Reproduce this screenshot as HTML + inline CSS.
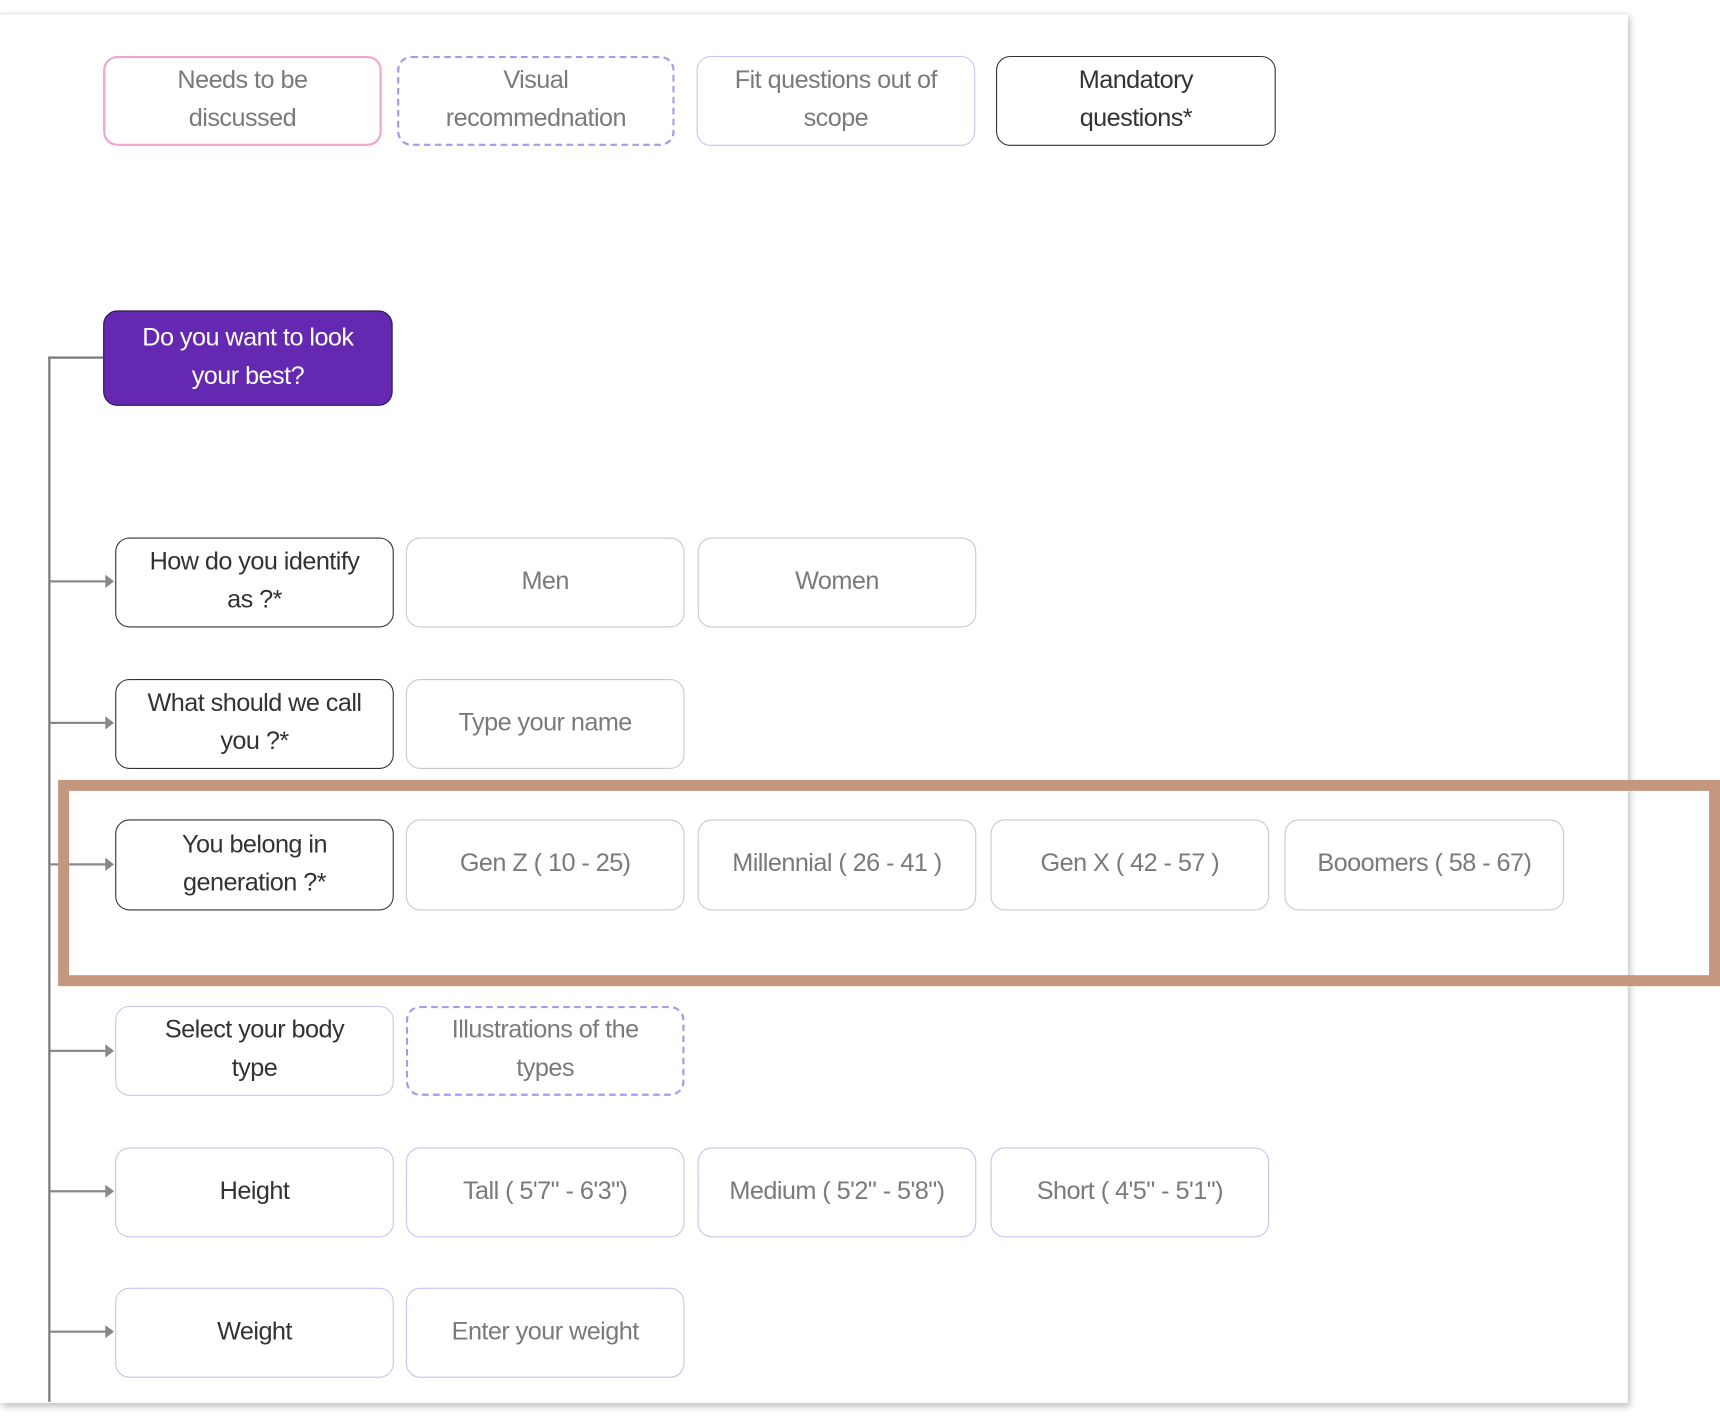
<!DOCTYPE html>
<html><head><meta charset="utf-8"><style>
html,body{margin:0;padding:0;background:#fff;width:1720px;height:1426px;overflow:hidden}
#s{position:absolute;left:0;top:0;width:1568px;height:1300px;transform:scale(1.09694);transform-origin:0 0;font-family:"Liberation Sans",sans-serif}
.page{position:absolute;left:0;top:12px;width:1484px;height:1266px;background:#fff;box-shadow:2px 3px 6px rgba(0,0,0,.25);border-top:1px solid #e6e6e6}
.b{position:absolute;box-sizing:border-box;border-radius:13px;display:flex;align-items:center;justify-content:center;text-align:center;font-size:23px;line-height:35px;color:#7a7a7a;background:#fff;border:1.5px solid #c9c9c9;letter-spacing:-0.5px;padding-bottom:4px}
.q{border:1.5px solid #333;color:#333}
.lv{border:1.5px solid #c7c3f2}
.ds{border:2px dashed #a49ce6}
.pk{border:2px solid #f2a4cc}
.arr{position:absolute;left:45px;width:52px;height:2px;background:#888}
.arr:after{content:"";position:absolute;right:-7px;top:-5px;border-left:8px solid #888;border-top:6px solid transparent;border-bottom:6px solid transparent}
</style></head><body><div id="s">
<div class="page"></div>
<div class="b pk" style="left:94px;top:51px;width:254px;height:82px">Needs to be<br>discussed</div>
<div class="b ds" style="left:362px;top:51px;width:253px;height:82px">Visual<br>recommednation</div>
<div class="b lv" style="left:635px;top:51px;width:254px;height:82px">Fit questions out of<br>scope</div>
<div class="b q" style="left:908px;top:51px;width:255px;height:82px">Mandatory<br>questions*</div>
<div class="b" style="left:94px;top:283px;width:264px;height:87px;background:#6429b0;border:1.5px solid #2a1650;color:#fff">Do you want to look<br>your best?</div>
<div style="position:absolute;left:44px;top:325px;width:2px;height:953px;background:#777"></div>
<div style="position:absolute;left:44px;top:325px;width:50px;height:2px;background:#777"></div>

<div class="arr" style="top:529px"></div>
<div class="b q" style="left:105px;top:490px;width:254px;height:82px">How do you identify<br>as ?*</div>
<div class="b" style="left:370px;top:490px;width:254px;height:82px">Men</div>
<div class="b" style="left:636px;top:490px;width:254px;height:82px">Women</div>

<div class="arr" style="top:658px"></div>
<div class="b q" style="left:105px;top:619px;width:254px;height:82px">What should we call<br>you ?*</div>
<div class="b" style="left:370px;top:619px;width:254px;height:82px">Type your name</div>

<div class="arr" style="top:787px"></div>
<div class="b q" style="left:105px;top:747px;width:254px;height:83px">You belong in<br>generation ?*</div>
<div class="b" style="left:370px;top:747px;width:254px;height:83px">Gen Z ( 10 - 25)</div>
<div class="b" style="left:636px;top:747px;width:254px;height:83px">Millennial ( 26 - 41 )</div>
<div class="b" style="left:903px;top:747px;width:254px;height:83px">Gen X ( 42 - 57 )</div>
<div class="b" style="left:1171px;top:747px;width:255px;height:83px">Booomers ( 58 - 67)</div>

<div class="arr" style="top:957px"></div>
<div class="b lv" style="left:105px;top:917px;width:254px;height:82px;color:#333">Select your body<br>type</div>
<div class="b ds" style="left:370px;top:917px;width:254px;height:82px">Illustrations of the<br>types</div>

<div class="arr" style="top:1085px"></div>
<div class="b lv" style="left:105px;top:1046px;width:254px;height:82px;color:#333">Height</div>
<div class="b lv" style="left:370px;top:1046px;width:254px;height:82px">Tall ( 5'7" - 6'3")</div>
<div class="b lv" style="left:636px;top:1046px;width:254px;height:82px">Medium ( 5'2" - 5'8")</div>
<div class="b lv" style="left:903px;top:1046px;width:254px;height:82px">Short ( 4'5" - 5'1")</div>

<div class="arr" style="top:1213px"></div>
<div class="b lv" style="left:105px;top:1174px;width:254px;height:82px;color:#333">Weight</div>
<div class="b lv" style="left:370px;top:1174px;width:254px;height:82px">Enter your weight</div>

<div style="position:absolute;left:53px;top:711px;width:1515px;height:188px;box-sizing:border-box;border:10px solid #c4977e"></div>
</div></body></html>
